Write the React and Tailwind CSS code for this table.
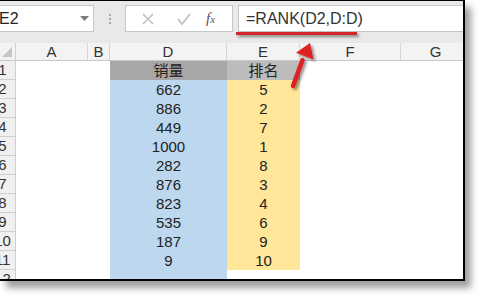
import React from 'react';

const cols = [
  { key: 'rh', w: 26 },
  { key: 'A', w: 72 },
  { key: 'B', w: 22 },
  { key: 'D', w: 117 },
  { key: 'E', w: 73 },
  { key: 'F', w: 101 },
  { key: 'G', w: 70 },
];

const sales = [662, 886, 449, 1000, 282, 876, 823, 535, 187, 9];
const ranks = [5, 2, 7, 1, 8, 3, 4, 6, 9, 10];

const gridCols = 'grid grid-cols-[26px_72px_22px_117px_73px_101px_70px]';

function Toolbar() {
  return (
    <div className="h-[42px] bg-[#e9e9e9] pt-[4px] flex items-start">
      {/* name box */}
      <div className="w-[94px] h-[27px] bg-white border border-l-0 border-[#c6c6c6] flex items-center justify-between pr-[4px]">
        <span className="ml-[-1px] text-[16px] text-[#222] font-['Liberation_Sans',sans-serif]">E2</span>
        <svg width="9" height="6" viewBox="0 0 9 6">
          <path d="M0 0 L9 0 L4.5 5 Z" fill="#7a7a7a" />
        </svg>
      </div>
      <div className="w-[31px] h-[27px] flex flex-col items-center justify-center gap-[2px]">
        <span className="w-[2px] h-[2px] bg-[#a8a8a8]" />
        <span className="w-[2px] h-[2px] bg-[#a8a8a8]" />
        <span className="w-[2px] h-[2px] bg-[#a8a8a8]" />
      </div>
      {/* cancel / enter / insert function */}
      <div className="w-[108px] h-[27px] bg-white border border-[#c6c6c6] flex items-center">
        <svg width="36" height="14" viewBox="0 0 36 14" className="ml-[4px]">
          <path d="M13 2 L23 12 M23 2 L13 12" stroke="#c2c2c2" strokeWidth="1.6" />
        </svg>
        <svg width="36" height="14" viewBox="0 0 36 14">
          <path d="M12 7 L16 12 L24 2" stroke="#c2c2c2" strokeWidth="1.8" fill="none" />
        </svg>
        <span className="ml-[4px] italic text-[15px] text-[#555] font-['Liberation_Serif',serif]">f<span className="text-[11px]">x</span></span>
      </div>
      {/* formula input */}
      <div className="ml-[5px] flex-1 h-[27px] bg-white border border-r-0 border-[#c6c6c6] flex items-center pl-[7px]">
        <span className="text-[16px] text-[#333] font-['Liberation_Sans',sans-serif]">=RANK(D2,D:D)</span>
      </div>
    </div>
  );
}

function ColumnHeader() {
  return (
    <div className={`${gridCols} h-[18px] bg-[#f3f3f3] border-b border-[#c8c8c8]`}>
      <div className="border-r border-[#d0d0d0] flex items-end justify-end pr-[3px] pb-[3px]">
        <svg width="10" height="10" viewBox="0 0 10 10">
          <path d="M10 0 L10 10 L0 10 Z" fill="#c6c6c6" />
        </svg>
      </div>
      {cols.slice(1).map(c => (
        <div key={c.key} className="border-r border-[#d6d6d6] flex items-center justify-center text-[15px] text-[#333] leading-none">
          {c.key}
        </div>
      ))}
    </div>
  );
}

function Row({ n, d, e, header }) {
  const dBg = header ? 'bg-[#a8a7a7]' : d !== undefined || n <= 12 ? 'bg-[#bdd7ee]' : 'bg-white';
  const eBg = header ? 'bg-[#bcbcbc]' : e !== undefined ? 'bg-[#ffe699]' : 'bg-white';
  return (
    <div className={`${gridCols} h-[19px]`}>
      <div className="bg-[#f0f0f0] border-r border-b border-[#cfcfcf] flex items-end justify-center text-[15px] text-[#333] leading-[18px]">
        {n}
      </div>
      <div className="bg-white" />
      <div className="bg-white" />
      <div className={`${dBg} flex items-end justify-center text-[15px] text-[#222] leading-[18px] font-['Liberation_Sans','Noto_Sans_CJK_SC',sans-serif]`}>
        {d}
      </div>
      <div className={`${eBg} flex items-end justify-center text-[15px] text-[#222] leading-[18px] font-['Liberation_Sans','Noto_Sans_CJK_SC',sans-serif]`}>
        {e}
      </div>
      <div className="bg-white" />
      <div className="bg-white" />
    </div>
  );
}

function Marks() {
  return (
    <svg className="absolute left-0 top-0" width="463" height="279" viewBox="0 1 463 279">
      <defs>
        <filter id="drop" x="-30%" y="-30%" width="160%" height="160%">
          <feDropShadow dx="2" dy="2" stdDeviation="1.5" floodColor="#000" floodOpacity="0.45" />
        </filter>
      </defs>
      <g filter="url(#drop)">
        <rect x="236" y="32" width="121" height="3" fill="#d3262b" />
        <path d="M293 86 L302.5 60" stroke="#dc2224" strokeWidth="4.5" strokeLinecap="round" />
        <path d="M310 43 L313.5 59.5 L296 52.8 Z" fill="#dc2224" />
      </g>
    </svg>
  );
}

export default function App() {
  return (
    <div className="w-[488px] h-[302px] bg-white font-['Liberation_Sans',sans-serif]">
      <div className="relative w-[465px] h-[281px] border-t border-r-2 border-b-2 border-black bg-white overflow-hidden shadow-[6px_7px_7px_rgba(0,0,0,0.38)]">
        <Toolbar />
        <div className="ml-[-10px]">
          <ColumnHeader />
          <Row n={1} d="销量" e="排名" header />
          {sales.map((s, i) => (
            <Row key={i} n={i + 2} d={s} e={ranks[i]} />
          ))}
          <Row n={12} />
        </div>
        <Marks />
      </div>
    </div>
  );
}
